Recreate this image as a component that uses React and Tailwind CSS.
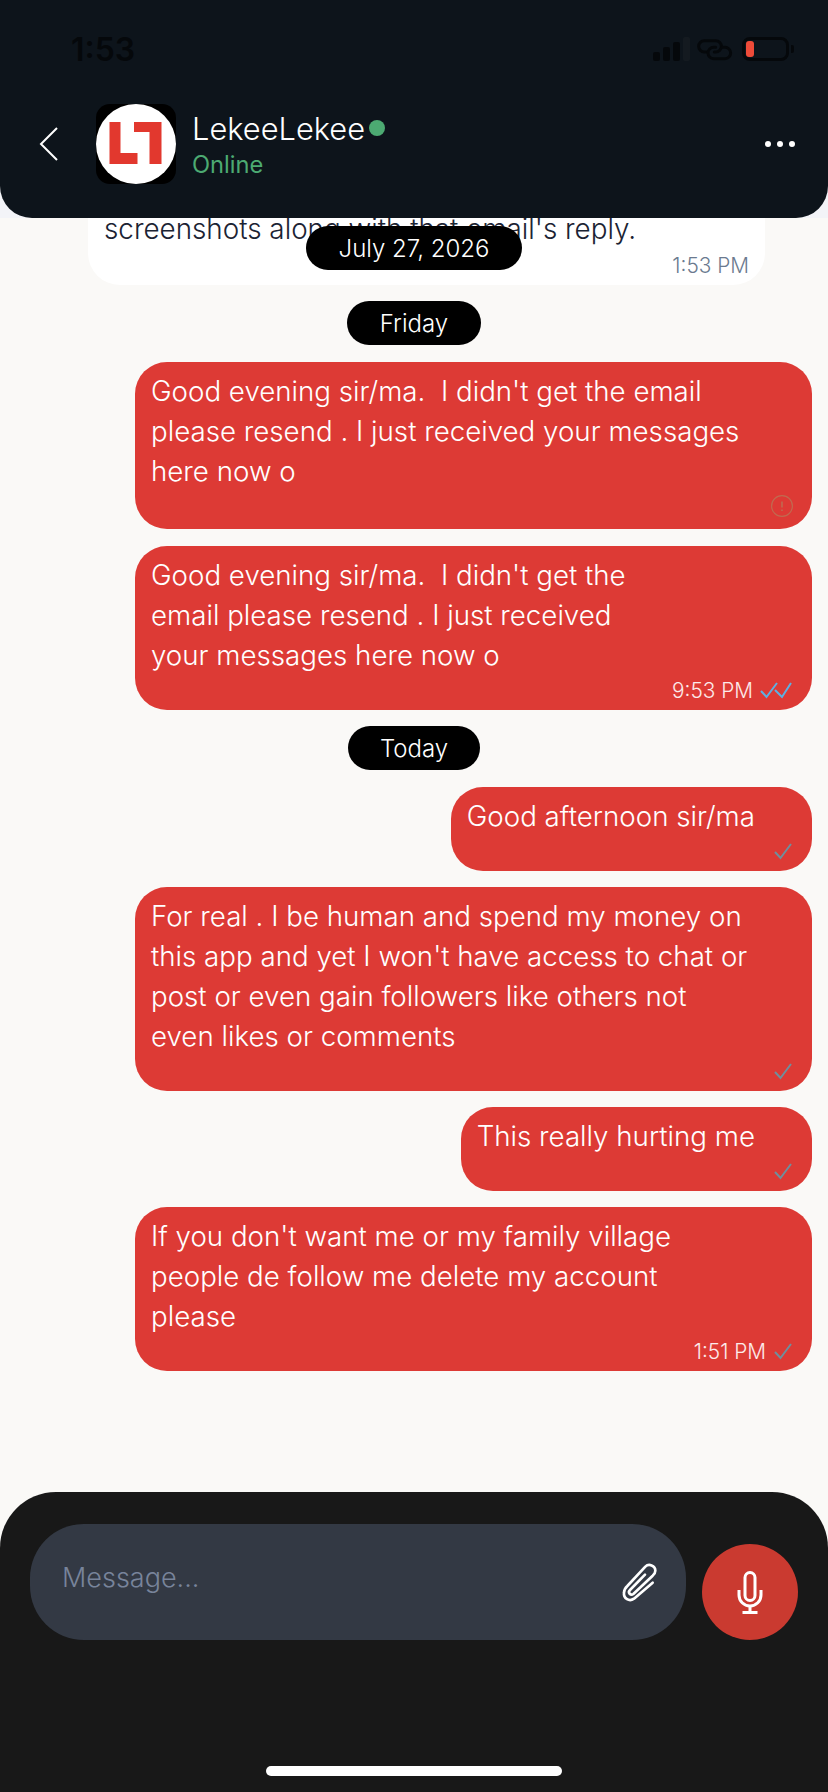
function Check() {
  return (
    <svg width="18" height="17" viewBox="0 0 18 17" fill="none" stroke="#6f8f9c" strokeWidth="2" className="ml-[8px]">
      <path d="M1 9l5.500 6L17 1" />
    </svg>
  );
}

function DoubleCheck() {
  return (
    <svg width="32" height="17" viewBox="0 0 32 17" fill="none" stroke="#5db0e2" strokeWidth="2" className="ml-[7px]">
      <path d="M1 9l5.500 6L17 1" />
      <path d="M15 8l7 7L31 1" />
    </svg>
  );
}

function Pending() {
  return (
    <svg width="22" height="22" viewBox="0 0 22 22" fill="none" stroke="#c06a50" strokeWidth="1.2" className="mr-[-1px]">
      <circle cx="11" cy="11" r="10.400" />
      <path d="M11 6.500v6M11 14.500v1.500" strokeWidth="1.600" />
    </svg>
  );
}

function Bubble({ lines, time, status, pb = "pb-0", short = false }) {
  return (
    <div className={`${short ? "self-end" : "ml-[135px]"} bg-[#dd3a35] rounded-[32px] pt-[9px] pl-[16px] pr-[20px] ${pb}`}>
      <p className={`text-[27.7px] leading-[40px] font-[350] text-white whitespace-pre-wrap ${short ? "mr-[37px]" : ""}`}>
        {lines.map((l) => (
          <span key={l} className="block">{l}</span>
        ))}
      </p>
      <div className="h-[35px] pb-[5px] flex items-center justify-end text-[20.8px] font-[350] text-white/90">
        {time && <span className="mt-[2px]">{time}</span>}
        {status}
      </div>
    </div>
  );
}

function DatePill({ label, className }) {
  return (
    <div className={`bg-black text-white text-[24px] font-[350] rounded-full h-[44px] pt-[2px] flex items-center justify-center ${className}`}>
      {label}
    </div>
  );
}

export default function App() {
  return (
    <div className="w-screen h-screen flex flex-col bg-[#faf9f7] overflow-hidden font-['Inter',sans-serif]">
      {/* Header */}
      <div className="bg-[#f3f4f8] relative z-10 shrink-0">
        <header className="h-[218px] bg-[#0d141b] rounded-b-[32px] px-[36px]">
          {/* Status bar */}
          <div className="h-[104px] flex justify-between">
            <span className="ml-[35px] mt-[30px] text-[32px] leading-[40px] font-semibold text-[#05080b]">1:53</span>
            <div className="flex items-start mt-[37px] mr-[-2px]">
              <svg width="37" height="24" viewBox="0 0 37 24" fill="#05080b">
                <rect x="0" y="15" width="7" height="9" rx="2" />
                <rect x="10" y="10" width="7" height="14" rx="2" />
                <rect x="20" y="5" width="7" height="19" rx="2" />
                <rect x="30" y="0" width="7" height="24" rx="2" fill="#141a20" />
              </svg>
              <svg width="36" height="22" viewBox="170 27 108 66" fill="none" stroke="#05080b" strokeWidth="9" strokeLinecap="round" className="ml-[7px] mt-[2px]">
                <path d="M200 66H192A17 17 0 0 1 192 32H226A17 17 0 0 1 226 66H222" />
                <path d="M246 52H254A17 17 0 0 1 254 86H220A17 17 0 0 1 220 52H226" />
              </svg>
              <div className="flex items-center ml-[9px]">
                <div className="w-[47px] h-[24px] rounded-[8px] border-[3px] border-[#05080b] pl-[1px] py-[1px]">
                  <div className="w-[8px] h-full rounded-[3px] bg-[#ee4b39]" />
                </div>
                <div className="w-[3px] h-[8px] bg-[#05080b] rounded-r-[2px] ml-[2px]" />
              </div>
            </div>
          </div>
          {/* Contact row */}
          <div className="h-[80px] flex items-center">
            <svg width="20" height="34" viewBox="0 0 20 34" fill="none" stroke="#fff" strokeWidth="2" className="ml-[2px] shrink-0">
              <path d="M19 1L3 17l16 16" />
            </svg>
            <div className="ml-[38px] w-[80px] h-[80px] rounded-[14px] bg-black shrink-0">
              <svg width="80" height="80" viewBox="0 0 80 80">
                <circle cx="40" cy="40" r="40" fill="#fff" />
                <path d="M13.500 18h11v31h17v11h-28z" fill="#e2382e" />
                <path d="M38 18h27.500v42h-12v-32H38z" fill="#e2382e" />
              </svg>
            </div>
            <div className="ml-[16px] flex-1 pt-[2px]">
              <div className="flex items-center">
                <span className="text-[30.8px] leading-[38px] font-[350] text-white">LekeeLekee</span>
                <span className="w-[16px] h-[16px] rounded-full bg-[#4caa72] ml-[4px] -mt-[2px]" />
              </div>
              <div className="text-[23.7px] leading-[30px] mt-[2px] text-[#4caa72]">Online</div>
            </div>
            <div className="flex gap-[6px] mr-[-3px]">
              <span className="w-[6px] h-[6px] rounded-full bg-white" />
              <span className="w-[6px] h-[6px] rounded-full bg-white" />
              <span className="w-[6px] h-[6px] rounded-full bg-white" />
            </div>
          </div>
        </header>
      </div>

      {/* Messages */}
      <main className="flex-1 relative overflow-hidden pr-[16px] flex flex-col">
        <div className="ml-[88px] mr-[47px] -mt-[20px] bg-white rounded-b-[32px] pt-[11px] pl-[16px] pr-[16px] h-[87px] shrink-0">
          <p className="text-[27.8px] leading-[40px] font-[350] text-[#1b2333]">screenshots along with that email's reply.</p>
          <div className="text-right text-[20.8px] leading-[24px] font-[350] text-[#6b7a8f] mt-[5px]">1:53 PM</div>
        </div>
        <DatePill label="July 27, 2026" className="absolute top-[8px] left-[306px] w-[216px]" />

        <DatePill label="Friday" className="self-center ml-[16px] w-[134px] mt-[16px] mb-[17px] shrink-0" />
        <Bubble
          lines={["Good evening sir/ma.  I didn't get the email", "please resend . I just received your messages", "here now o"]}
          pb="pb-[3px]"
          status={<Pending />}
        />
        <div className="h-[17px] shrink-0" />
        <Bubble
          lines={["Good evening sir/ma.  I didn't get the", "email please resend . I just received", "your messages here now o"]}
          time="9:53 PM"
          status={<DoubleCheck />}
        />
        <DatePill label="Today" className="self-center ml-[16px] w-[132px] mt-[16px] mb-[17px] shrink-0" />
        <Bubble short lines={["Good afternoon sir/ma"]} status={<Check />} />
        <div className="h-[16px] shrink-0" />
        <Bubble
          lines={["For real . I be human and spend my money on", "this app and yet I won't have access to chat or", "post or even gain followers like others not", "even likes or comments"]}
          status={<Check />}
        />
        <div className="h-[16px] shrink-0" />
        <Bubble short lines={["This really hurting me"]} status={<Check />} />
        <div className="h-[16px] shrink-0" />
        <Bubble
          lines={["If you don't want me or my family village", "people de follow me delete my account", "please"]}
          time="1:51 PM"
          status={<Check />}
        />
      </main>

      {/* Composer */}
      <footer className="h-[300px] shrink-0 bg-[#181818] rounded-t-[56px] relative">
        <div className="pt-[32px] pl-[30px] pr-[30px] flex items-end gap-[16px]">
          <div className="flex-1 h-[116px] rounded-[54px] bg-[#333944] flex items-center pl-[32px] pr-[26px]">
            <span className="flex-1 text-[27px] font-[350] text-[#78849b] -mt-[8px]">Message...</span>
            <svg width="40" height="42" viewBox="60 33 120 126" fill="none" stroke="#fff" strokeWidth="8" strokeLinecap="round" strokeLinejoin="round">
              <path d="M158 98L102 146C88 156 70 146 72 128C72 120 76 114 82 108L136 50C146 40 166 46 166 62C166 68 163 72 158 77L100 132C92 138 82 128 90 120L135 74" />
            </svg>
          </div>
          <div className="w-[96px] h-[96px] rounded-full bg-[#ca3a30] flex items-center justify-center">
            <svg width="30" height="46" viewBox="0 0 30 46" fill="none" stroke="#fff" strokeWidth="3">
              <rect x="10" y="3.500" width="10" height="28" rx="5" />
              <path d="M4 21v5a11 11 0 0 0 22 0v-5" />
              <path d="M15 37v6M7.500 43.500h15" />
            </svg>
          </div>
        </div>
        <div className="absolute bottom-[16px] left-[266px] w-[296px] h-[10px] rounded-full bg-white" />
      </footer>
    </div>
  );
}
